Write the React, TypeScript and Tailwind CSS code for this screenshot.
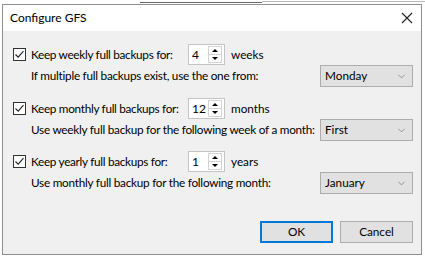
import { ChevronDown } from "lucide-react"

const font = { fontFamily: "'Segoe UI', Lato, 'Liberation Sans', sans-serif" }

function Check() {
    return (
        <div className="w-[13px] h-[13px] border border-[#333333] bg-white flex items-center justify-center shrink-0">
            <svg width="11" height="11" viewBox="0 0 11 11">
                <path d="M1.5 5.5 L4.2 8.2 L9.5 2.2" fill="none" stroke="#222" strokeWidth="1.1" />
            </svg>
        </div>
    )
}

function Spinner({ value }: { value: string }) {
    return (
        <div className="w-[37px] h-[21px] border border-[#c4c4c4] bg-white flex items-center shrink-0">
            <span className="flex-1 pl-[3px] text-[12px] text-black leading-none">{value}</span>
            <div className="w-[14px] h-[17px] mr-[2px] flex flex-col border border-[#d4d4d4]">
                <div className="flex-1 flex items-center justify-center border-b border-[#d4d4d4]">
                    <div className="w-0 h-0 border-l-[3px] border-r-[3px] border-b-[3px] border-l-transparent border-r-transparent border-b-black" />
                </div>
                <div className="flex-1 flex items-center justify-center">
                    <div className="w-0 h-0 border-l-[3px] border-r-[3px] border-t-[3px] border-l-transparent border-r-transparent border-t-black" />
                </div>
            </div>
        </div>
    )
}

function Select({ value }: { value: string }) {
    return (
        <div className="w-[93px] h-[22px] border border-[#adadad] bg-[#e1e1e1] flex items-center justify-between pl-[4px] pr-[5px] shrink-0">
            <span className="text-[11.75px] text-black">{value}</span>
            <ChevronDown size={11} strokeWidth={1.2} className="text-[#555]" />
        </div>
    )
}

function Group({ label, value, unit, sub, option }: { label: string; value: string; unit: string; sub: string; option: string }) {
    return (
        <div className="flex flex-col">
            <div className="h-[21px] flex items-center pl-[10px]">
                <Check />
                <span className="w-[162px] pl-[5px] text-[11.75px] tracking-[-0.3px] text-black whitespace-nowrap">{label}</span>
                <Spinner value={value} />
                <span className="pl-[6px] text-[11.75px] text-black">{unit}</span>
            </div>
            <div className="h-[22px] flex items-center pl-[28px] pr-[8px]">
                <span className="flex-1 min-w-0 text-[11.75px] tracking-[-0.25px] text-black whitespace-nowrap">{sub}</span>
                <Select value={option} />
            </div>
        </div>
    )
}

export default function App() {
    return (
        <div className="w-[425px] h-[257px] bg-white overflow-hidden" style={font}>
            {/* window behind, only the lower edge shows */}
            <div className="h-[4px] overflow-hidden pl-[140px] flex">
                <div className="w-[122px] border-b border-[#666] mb-[1px]" />
                <div className="flex-1 border-b border-[#bbb] mb-[2px]" />
            </div>
            <div className="ml-[2px] w-[420px] h-[251px] border border-[#8f8f8f] flex flex-col">
                <div className="h-[26px] bg-white flex items-center justify-between pl-[7px] pr-[6px]">
                    <span className="text-[12px] text-black">Configure GFS</span>
                    <svg width="12" height="12" viewBox="0 0 12 12" className="mr-[2px]">
                        <path d="M1 1 L11 11 M11 1 L1 11" stroke="#222" strokeWidth="1.1" />
                    </svg>
                </div>
                <div className="flex-1 bg-[#f0f0f0] flex flex-col pt-[13px]">
                    <Group label="Keep weekly full backups for:" value="4" unit="weeks" sub="If multiple full backups exist, use the one from:" option="Monday" />
                    <div className="mt-[11px]">
                        <Group label="Keep monthly full backups for:" value="12" unit="months" sub="Use weekly full backup for the following week of a month:" option="First" />
                    </div>
                    <div className="mt-[10px]">
                        <Group label="Keep yearly full backups for:" value="1" unit="years" sub="Use monthly full backup for the following month:" option="January" />
                    </div>
                    <div className="flex justify-end gap-[7px] pr-[8px] mt-[27px]">
                        <button className="w-[73px] h-[22px] bg-[#e1e1e1] border-2 border-[#0078d7] text-[11.75px] text-black">OK</button>
                        <button className="w-[73px] h-[22px] bg-[#e1e1e1] border border-[#adadad] text-[11.75px] text-black">Cancel</button>
                    </div>
                </div>
            </div>
        </div>
    )
}
